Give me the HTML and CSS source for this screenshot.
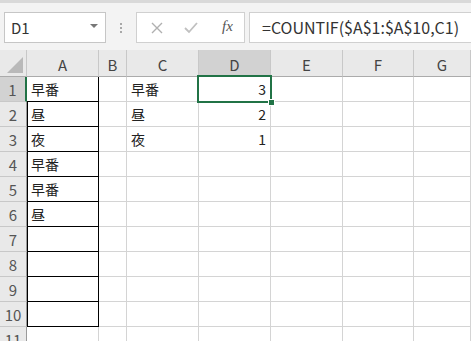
FILE: index.html
```html
<!DOCTYPE html>
<html>
    <head>
        <meta charset="utf-8" />
        <title>COUNTIF</title>
        <link rel="stylesheet" href="styles.css">
    </head>
    <body>
        <div class="toolbar">
            <div class="nameBox">
                <span class="cellName">D1</span>
                <span class="dropArrow"></span>
            </div>
            <div class="grip"><span></span><span></span><span></span></div>
            <div class="buttons">
                <svg class="btn" width="14" height="14" viewBox="0 0 14 14"><path d="M2 2 L12 12 M12 2 L2 12" stroke="#b0b0b0" stroke-width="1.4" fill="none"/></svg>
                <svg class="btn" width="16" height="14" viewBox="0 0 16 14"><path d="M2 7 L6 11 L14 2" stroke="#c0c0c0" stroke-width="1.8" fill="none"/></svg>
                <span class="fx">fx</span>
            </div>
            <div class="formula">=COUNTIF($A$1:$A$10,C1)</div>
        </div>

        <div class="sheet">
            <div class="corner"><span class="tri"></span></div>
            <div class="colHead">A</div>
            <div class="colHead">B</div>
            <div class="colHead">C</div>
            <div class="colHead current">D</div>
            <div class="colHead">E</div>
            <div class="colHead">F</div>
            <div class="colHead">G</div>

            <div class="rowHead current">1</div>
            <div class="cell boxed">早番</div><div class="cell"></div><div class="cell">早番</div><div class="cell num">3</div><div class="cell"></div><div class="cell"></div><div class="cell"></div>

            <div class="rowHead">2</div>
            <div class="cell boxed">昼</div><div class="cell"></div><div class="cell">昼</div><div class="cell num">2</div><div class="cell"></div><div class="cell"></div><div class="cell"></div>

            <div class="rowHead">3</div>
            <div class="cell boxed">夜</div><div class="cell"></div><div class="cell">夜</div><div class="cell num">1</div><div class="cell"></div><div class="cell"></div><div class="cell"></div>

            <div class="rowHead">4</div>
            <div class="cell boxed">早番</div><div class="cell"></div><div class="cell"></div><div class="cell"></div><div class="cell"></div><div class="cell"></div><div class="cell"></div>

            <div class="rowHead">5</div>
            <div class="cell boxed">早番</div><div class="cell"></div><div class="cell"></div><div class="cell"></div><div class="cell"></div><div class="cell"></div><div class="cell"></div>

            <div class="rowHead">6</div>
            <div class="cell boxed">昼</div><div class="cell"></div><div class="cell"></div><div class="cell"></div><div class="cell"></div><div class="cell"></div><div class="cell"></div>

            <div class="rowHead">7</div>
            <div class="cell boxed"></div><div class="cell"></div><div class="cell"></div><div class="cell"></div><div class="cell"></div><div class="cell"></div><div class="cell"></div>

            <div class="rowHead">8</div>
            <div class="cell boxed"></div><div class="cell"></div><div class="cell"></div><div class="cell"></div><div class="cell"></div><div class="cell"></div><div class="cell"></div>

            <div class="rowHead">9</div>
            <div class="cell boxed"></div><div class="cell"></div><div class="cell"></div><div class="cell"></div><div class="cell"></div><div class="cell"></div><div class="cell"></div>

            <div class="rowHead">10</div>
            <div class="cell boxed"></div><div class="cell"></div><div class="cell"></div><div class="cell"></div><div class="cell"></div><div class="cell"></div><div class="cell"></div>

            <div class="rowHead">11</div>
            <div class="cell"></div><div class="cell"></div><div class="cell"></div><div class="cell"></div><div class="cell"></div><div class="cell"></div><div class="cell"></div>

            <!-- active cell D1 -->
            <div class="selection"><span class="handle"></span></div>
        </div>
    </body>
</html>
```

FILE: styles.css
```css
body {
    margin:             0;
    background:         #ffffff;
    font-family:        "Noto Sans CJK JP", "Noto Sans", sans-serif;
    color:              #222;
    overflow:           hidden;
    width:              471px;
    height:             341px;
}

/* Formula bar */
.toolbar {
    background:         #f3f3f3;
    border-top:         3px solid #d9d9d9;
    box-sizing:         border-box;
    height:             50px;
    display:            flex;
    align-items:        flex-start;
    padding:            9px 0 0 4px;
}

.nameBox {
    background:         #ffffff;
    border:             1px solid #c6c6c6;
    box-sizing:         border-box;
    width:              102px;
    height:             31px;
    display:            flex;
    align-items:        center;
    justify-content:    space-between;
    padding:            0 7px 0 6px;
}

.cellName {
    font-size:          15px;
    color:              #333;
}

.dropArrow {
    width:              0;
    height:             0;
    border-left:        4px solid transparent;
    border-right:       4px solid transparent;
    border-top:         4px solid #777;
    margin-top:         -4px;
}

.grip {
    width:              30px;
    height:             31px;
    display:            flex;
    flex-direction:     column;
    align-items:        center;
    justify-content:    center;
    gap:                2px;
}

.grip span {
    width:              2px;
    height:             2px;
    background:         #a8a8a8;
}

.buttons {
    background:         #ffffff;
    border:             1px solid #d0d0d0;
    box-sizing:         border-box;
    width:              109px;
    height:             31px;
    display:            flex;
    align-items:        center;
    padding:            0 0 0 13px;
    gap:                19px;
}

.fx {
    font-family:        "Liberation Serif", serif;
    font-style:         italic;
    font-size:          15px;
    color:              #555;
    margin-left:        4px;
    margin-top:         -2px;
}

.formula {
    background:         #ffffff;
    border:             1px solid #d0d0d0;
    border-right:       none;
    box-sizing:         border-box;
    margin-left:        4px;
    flex:               1;
    height:             31px;
    padding:            0 0 0 12px;
    font-size:          16px;
    line-height:        29px;
    color:              #333;
    white-space:        nowrap;
}

/* Worksheet grid */
.sheet {
    position:           relative;
    display:            grid;
    grid-template-columns: 27px 72px 28px 72px 72px 72px 71px 57px;
    grid-template-rows: 27px repeat(11, 25px);
}

.corner, .colHead, .rowHead {
    background:         #e9e9e9;
    box-sizing:         border-box;
    color:              #444;
    font-size:          15px;
}

.corner {
    border-right:       1px solid #c8c8c8;
    border-bottom:      1px solid #ababab;
    display:            flex;
    align-items:        flex-end;
    justify-content:    flex-end;
    padding:            0 3px 3px 0;
}

.corner .tri {
    width:              0;
    height:             0;
    border-left:        16px solid transparent;
    border-bottom:      16px solid #b9b9b9;
}

.colHead {
    border-right:       1px solid #c8c8c8;
    border-bottom:      1px solid #ababab;
    display:            flex;
    align-items:        center;
    justify-content:    center;
    padding-top:        3px;
}

.colHead.current {
    background:         #d2d2d2;
}

.rowHead {
    border-right:       1px solid #9a9a9a;
    border-bottom:      1px solid #c8c8c8;
    display:            flex;
    align-items:        center;
    justify-content:    center;
    color:              #555;
}

.rowHead.current {
    background:         #d2d2d2;
    border-right:       2px solid #217346;
}

.cell {
    box-sizing:         border-box;
    border-right:       1px solid #d4d4d4;
    border-bottom:      1px solid #d4d4d4;
    font-size:          14px;
    line-height:        24px;
    padding:            0 4px;
    white-space:        nowrap;
    overflow:           hidden;
}

.cell.boxed {
    border-right-color: #000;
    border-bottom-color: #000;
    box-shadow:         inset 1px 0 0 #000;
}

.rowHead.current + .cell.boxed {
    box-shadow:         none;
}

.cell.num {
    text-align:         right;
}

.selection {
    position:           absolute;
    left:               197px;
    top:                25px;
    width:              75px;
    height:             28px;
    box-sizing:         border-box;
    border:             2px solid #217346;
}

.selection .handle {
    position:           absolute;
    right:              -5px;
    bottom:             -5px;
    width:              5px;
    height:             5px;
    background:         #217346;
    border:             1px solid #ffffff;
}
```
